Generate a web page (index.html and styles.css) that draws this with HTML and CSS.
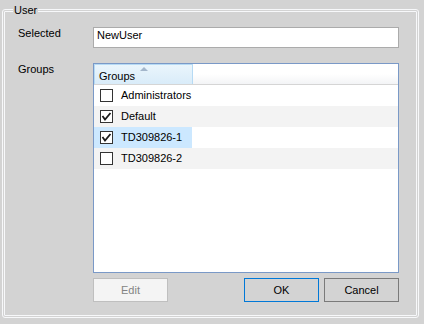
FILE: index.html
```html
<!DOCTYPE html>
<html lang="en">
  <head>
    <meta charset="UTF-8" />
    <title>User</title>
    <link rel="stylesheet" href="styles.css">
  </head>
  <body>
    <form class="dialog">
      <fieldset class="user-box">
        <legend class="user-legend">User</legend>
        <div class="field-grid">
          <label class="field-label" for="selected">Selected</label>
          <input class="text-input" id="selected" type="text" value="NewUser" />
          <label class="field-label">Groups</label>
          <div class="group-list">
            <div class="list-header">
              <div class="header-cell sorted">Groups<span class="sort-arrow"></span></div>
              <div class="header-rest"></div>
            </div>
            <ul class="list-rows">
              <li class="list-row">
                <span class="row-cell"><span class="check-box"></span>Administrators</span>
              </li>
              <li class="list-row alt">
                <span class="row-cell"><span class="check-box checked"><svg viewBox="0 0 13 13" width="13" height="13"><polyline points="2.5,6 5,9.5 10.5,3" /></svg></span>Default</span>
              </li>
              <li class="list-row">
                <span class="row-cell selected"><span class="check-box checked"><svg viewBox="0 0 13 13" width="13" height="13"><polyline points="2.5,6 5,9.5 10.5,3" /></svg></span>TD309826-1</span>
              </li>
              <li class="list-row alt">
                <span class="row-cell"><span class="check-box"></span>TD309826-2</span>
              </li>
            </ul>
          </div>
        </div>
        <div class="button-row">
          <button type="button" class="btn btn-disabled" disabled>Edit</button>
          <button type="button" class="btn btn-default">OK</button>
          <button type="button" class="btn">Cancel</button>
        </div>
      </fieldset>
    </form>
  </body>
</html>
```

FILE: styles.css
```css
body {
  margin: 0;
  background: #d3d3d3;
  font-family: "Liberation Sans", Arial, sans-serif;
  font-size: 11px;
  color: #000;
}

.dialog {
  margin: 0;
  padding: 3px 0 0 2px;
}

.user-box {
  box-sizing: border-box;
  width: 417px;
  height: 315px;
  margin: 0;
  padding: 10px 0 13px 13px;
  border: 3px double #f7f8fa;
  border-radius: 3px;
}

.user-legend {
  padding: 0 1px;
  margin-left: -5px;
  line-height: 14px;
}

.field-grid {
  display: grid;
  grid-template-columns: 75px 306px;
  grid-template-rows: 21px 210px;
  row-gap: 15px;
}

.field-label {
  line-height: 13px;
}

.text-input {
  box-sizing: border-box;
  width: 306px;
  height: 21px;
  margin: 0;
  padding: 0 3px 6px;
  border: 1px solid #ababab;
  background: #fff;
  font-family: inherit;
  font-size: 11px;
  color: #000;
  outline: none;
}

.group-list {
  box-sizing: border-box;
  border: 1px solid #7a99c7;
  background: #fff;
}

.list-header {
  display: flex;
  height: 21px;
  box-sizing: border-box;
  border-bottom: 1px solid #d5d5d5;
  background: linear-gradient(#fff, #fff 50%, #f3f4f6);
}

.header-cell {
  position: relative;
  box-sizing: border-box;
  width: 99px;
  padding: 5px 0 0 4px;
  line-height: 13px;
}

.header-cell.sorted {
  border: 1px solid #b6daf4;
  border-bottom: none;
  background: linear-gradient(#eaf5fc, #d9ecf9);
  padding-left: 4px;
}

.sort-arrow {
  position: absolute;
  top: 2px;
  left: 45px;
  width: 0;
  height: 0;
  border-left: 4px solid transparent;
  border-right: 4px solid transparent;
  border-bottom: 4px solid #a3b6cb;
}

.header-rest {
  flex: 1;
}

.list-rows {
  list-style: none;
  margin: 0;
  padding: 0;
}

.list-row {
  height: 21px;
  display: flex;
}

.list-row.alt {
  background: #f3f3f3;
}

.row-cell {
  box-sizing: border-box;
  width: 98px;
  display: flex;
  align-items: center;
  gap: 8px;
  padding-left: 6px;
  line-height: 13px;
}

.row-cell.selected {
  background: #cce8ff;
}

.check-box {
  box-sizing: border-box;
  width: 13px;
  height: 13px;
  border: 1px solid #333;
  background: #fff;
  flex-shrink: 0;
  position: relative;
}

.check-box svg {
  display: block;
  margin: -1px;
}

.check-box polyline {
  fill: none;
  stroke: #1a1a1a;
  stroke-width: 1.8;
}

.button-row {
  display: flex;
  gap: 5px;
  width: 306px;
  margin: 5px 0 0 75px;
}

.btn {
  box-sizing: border-box;
  width: 75px;
  height: 24px;
  padding: 0;
  border: 1px solid #7a7a7a;
  background: #d3d3d3;
  font-family: inherit;
  font-size: 11px;
  color: #000;
}

.btn-disabled {
  border-color: #bfbfbf;
  background: #f4f4f4;
  color: #838383;
}

.btn-default {
  margin-left: auto;
  border-color: #0078d7;
}
```
